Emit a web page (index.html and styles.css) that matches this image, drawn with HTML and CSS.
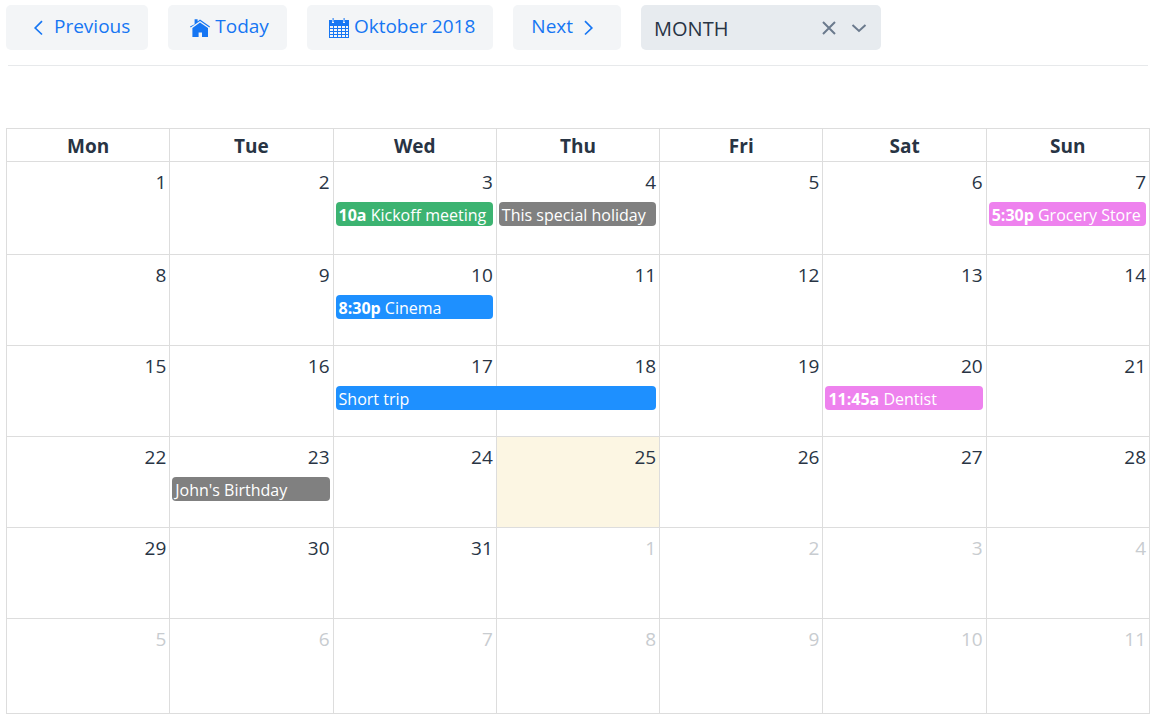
FILE: index.html
```html
<!DOCTYPE html>
<html lang="en">
<head>
    <meta charset="UTF-8">
    <meta name="viewport" content="width=device-width, initial-scale=1.0">
    <title>Calendar</title>
    <link rel="stylesheet" href="styles.css">
</head>
<body>
    <div class="toolbar">
        <button type="button" class="btn">
            <svg class="chevron" viewBox="0 0 30 20"><path d="M18 4.2 L11.2 11 L18 17.5"/></svg>
            Previous
        </button>
        <button type="button" class="btn">
            <svg class="icon" viewBox="0 0 20 20">
                <path d="M4.6 6.2 V1.2 H7.6 V3.4 L10 1.6 L20 8.4 L19.4 9.4 L10 3 L0.6 9.4 L0 8.4 Z"/>
                <path d="M10 4.4 L18 9.9 V19 H12 V14.6 H8.6 V19 H2.4 V9.9 Z"/>
            </svg>
            Today
        </button>
        <button type="button" class="btn">
            <svg class="icon" viewBox="0 0 20 20">
                <path fill-rule="evenodd" d="M0 2 H3 V5 H5 V2 H14 V5 H16 V2 H20 V20 H0 Z
                    M1 8 H4 V10 H1 Z M5 8 H8 V10 H5 Z M9 8 H12 V10 H9 Z M13 8 H16 V10 H13 Z M17 8 H19 V10 H17 Z
                    M1 11 H4 V13 H1 Z M5 11 H8 V13 H5 Z M9 11 H12 V13 H9 Z M13 11 H16 V13 H13 Z M17 11 H19 V13 H17 Z
                    M1 14 H4 V16 H1 Z M5 14 H8 V16 H5 Z M9 14 H12 V16 H9 Z M13 14 H16 V16 H13 Z M17 14 H19 V16 H17 Z
                    M1 17 H4 V19 H1 Z M5 17 H8 V19 H5 Z M9 17 H12 V19 H9 Z M13 17 H16 V19 H13 Z M17 17 H19 V19 H17 Z"/>
                <path d="M3.6 0 H4.6 V4 H3.6 Z M14.6 0 H15.6 V4 H14.6 Z"/>
            </svg>
            Oktober 2018
        </button>
        <button type="button" class="btn">
            Next
            <svg class="chevron" viewBox="0 0 30 20"><path d="M12 4.2 L18.8 11 L12 17.5"/></svg>
        </button>
        <div class="view-picker">
            <select class="view-select" aria-label="View">
                <option>MONTH</option>
                <option>WEEK</option>
                <option>DAY</option>
            </select>
            <button type="button" class="clear" aria-label="Clear">
                <svg viewBox="0 0 14 14"><path d="M1 1 L13 13 M13 1 L1 13"/></svg>
            </button>
            <svg class="caret" viewBox="0 0 16 14"><path d="M1.5 4 L8 10 L14.5 4"/></svg>
        </div>
    </div>

    <hr class="divider">

    <table class="calendar">
        <thead>
            <tr>
                <th>Mon</th>
                <th>Tue</th>
                <th>Wed</th>
                <th>Thu</th>
                <th>Fri</th>
                <th>Sat</th>
                <th>Sun</th>
            </tr>
        </thead>
        <tbody>
            <tr>
                <td>1</td>
                <td>2</td>
                <td>3<a href="#" class="event green"><b>10a</b> Kickoff meeting</a></td>
                <td>4<a href="#" class="event gray">This special holiday</a></td>
                <td>5</td>
                <td>6</td>
                <td>7<a href="#" class="event violet"><b>5:30p</b> Grocery Store</a></td>
            </tr>
            <tr>
                <td>8</td>
                <td>9</td>
                <td>10<a href="#" class="event blue"><b>8:30p</b> Cinema</a></td>
                <td>11</td>
                <td>12</td>
                <td>13</td>
                <td>14</td>
            </tr>
            <tr>
                <td>15</td>
                <td>16</td>
                <td>17<a href="#" class="event blue two-days">Short trip</a></td>
                <td>18</td>
                <td>19</td>
                <td>20<a href="#" class="event violet"><b>11:45a</b> Dentist</a></td>
                <td>21</td>
            </tr>
            <tr>
                <td>22</td>
                <td>23<a href="#" class="event gray">John's Birthday</a></td>
                <td>24</td>
                <td class="today">25</td>
                <td>26</td>
                <td>27</td>
                <td>28</td>
            </tr>
            <tr>
                <td>29</td>
                <td>30</td>
                <td>31</td>
                <td class="other">1</td>
                <td class="other">2</td>
                <td class="other">3</td>
                <td class="other">4</td>
            </tr>
            <tr>
                <td class="other">5</td>
                <td class="other">6</td>
                <td class="other">7</td>
                <td class="other">8</td>
                <td class="other">9</td>
                <td class="other">10</td>
                <td class="other">11</td>
            </tr>
        </tbody>
    </table>
</body>
</html>
```
FILE: styles.css
```css
* {
    box-sizing: border-box;
}

body {
    margin: 0;
    padding: 5px 8px 0 6px;
    background: white;
    color: #283444;
    font-family: 'Open Sans', 'Noto Sans', sans-serif;
    font-size: 19px;
}

.toolbar {
    display: flex;
    gap: 20px;
}

.btn {
    display: flex;
    align-items: center;
    height: 45px;
    padding: 0 18px 4px;
    border: none;
    border-radius: 5px;
    background: #f3f5f7;
    color: #1676f3;
    font-family: inherit;
    font-size: 19px;
    font-weight: 500;
    white-space: nowrap;
}

.icon {
    width: 20px;
    height: 20px;
    margin: 4px 5px 0 4px;
    fill: #1676f3;
}

.chevron {
    width: 30px;
    height: 20px;
    margin-top: 2px;
    fill: none;
    stroke: #1676f3;
    stroke-width: 1.7;
}

.view-picker {
    display: flex;
    align-items: center;
    width: 240px;
    height: 45px;
    padding: 0 14px 0 13px;
    border-radius: 5px;
    background: #e7ebef;
}

.view-select {
    flex: 1;
    appearance: none;
    padding: 2px 0 0;
    border: none;
    background: none;
    color: #283444;
    font-family: inherit;
    font-size: 20px;
}

.clear {
    width: 14px;
    height: 14px;
    margin-right: 15px;
    padding: 0;
    border: none;
    background: none;
}

.clear svg {
    display: block;
}

.caret {
    width: 16px;
    height: 14px;
}

.clear svg,
.caret {
    fill: none;
    stroke: #6b7a8d;
    stroke-width: 2;
}

.divider {
    height: 1px;
    margin: 15px 2px 62px;
    border: none;
    background: #e7e9eb;
}

.calendar {
    width: 100%;
    border-collapse: collapse;
    table-layout: fixed;
}

th,
td {
    border: 1px solid #ddd;
}

th {
    height: 33px;
    padding: 2px 0 0;
    font-weight: 700;
    line-height: 30px;
}

td {
    height: 91px;
    padding: 6px 3px 0 2px;
    line-height: 28px;
    text-align: right;
    vertical-align: top;
}

tbody tr:first-child td {
    height: 93px;
}

tbody tr:last-child td {
    height: 95px;
}

.today {
    background: #fcf6e3;
}

.other {
    color: #c8ccd0;
}

.event {
    display: block;
    height: 24px;
    margin-top: 6px;
    padding: 0 3px;
    border-radius: 4px;
    color: white;
    font-size: 16px;
    line-height: 26px;
    text-align: left;
    text-decoration: none;
    white-space: nowrap;
    overflow: hidden;
}

/* reaches over the border and padding into the next day */
.two-days {
    position: relative;
    width: calc(200% + 6px);
}

.green {
    background: #3cb371;
}

.gray {
    background: gray;
}

.violet {
    background: violet;
}

.blue {
    background: dodgerblue;
}
```
